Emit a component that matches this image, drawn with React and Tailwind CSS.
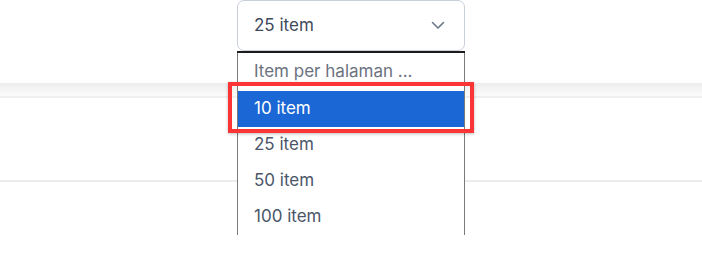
import React from "react";

export default function App() {
  const items = ["10 item", "25 item", "50 item", "100 item"];
  return (
    <div className="relative w-[702px] h-[264px] bg-white overflow-hidden" style={{ fontFamily: "Inter, 'Noto Sans', sans-serif" }}>
      {/* background page structure */}
      <div className="h-[83px] bg-white" />
      <div className="h-[13px] bg-gradient-to-b from-[#ededed] to-[#fbfbfb]" />
      <div className="h-[2px] bg-[#efefef]" />
      <div className="h-[82px] bg-white" />
      <div className="h-[2px] bg-[#ececec]" />
      <div className="h-[82px] bg-white" />

      {/* select + open dropdown overlay */}
      <div className="absolute left-[237px] top-0 w-[228px]">
        <div className="h-[51px] rounded-[7px] border border-[#c9d0dc] bg-white flex items-center justify-between pl-[16px] pr-[19px]">
          <span className="text-[17px] text-[#3f4a5c]">25 item</span>
          <svg width="14" height="9" viewBox="0 0 14 9" fill="none">
            <path d="M1.5 1.5 L7 7 L12.5 1.5" stroke="#6b7789" strokeWidth="1.6" strokeLinecap="round" strokeLinejoin="round" />
          </svg>
        </div>
        <div className="h-[2px] bg-[#1c1c1c]" />
        <div className="h-[182px] border-x border-[#7a7a7a] bg-white">
          <div className="h-[38px] flex items-center pl-[16px] text-[17px] text-[#6b7280]">Item per halaman ...</div>
          {items.map((it, i) => (
            <div
              key={it}
              className={
                i === 0
                  ? "h-[36px] flex items-center pl-[16px] text-[17px] text-white bg-[#1b67d6]"
                  : "h-[36px] flex items-center pl-[16px] text-[17px] text-[#4b5669]"
              }
            >
              {it}
            </div>
          ))}
        </div>
      </div>

      {/* red highlight box */}
      <div className="absolute left-[228px] top-[82px] w-[246px] h-[51px] border-[4px] border-[#fb3535] shadow-[0_1px_3px_rgba(0,0,0,0.25)]" />
    </div>
  );
}
